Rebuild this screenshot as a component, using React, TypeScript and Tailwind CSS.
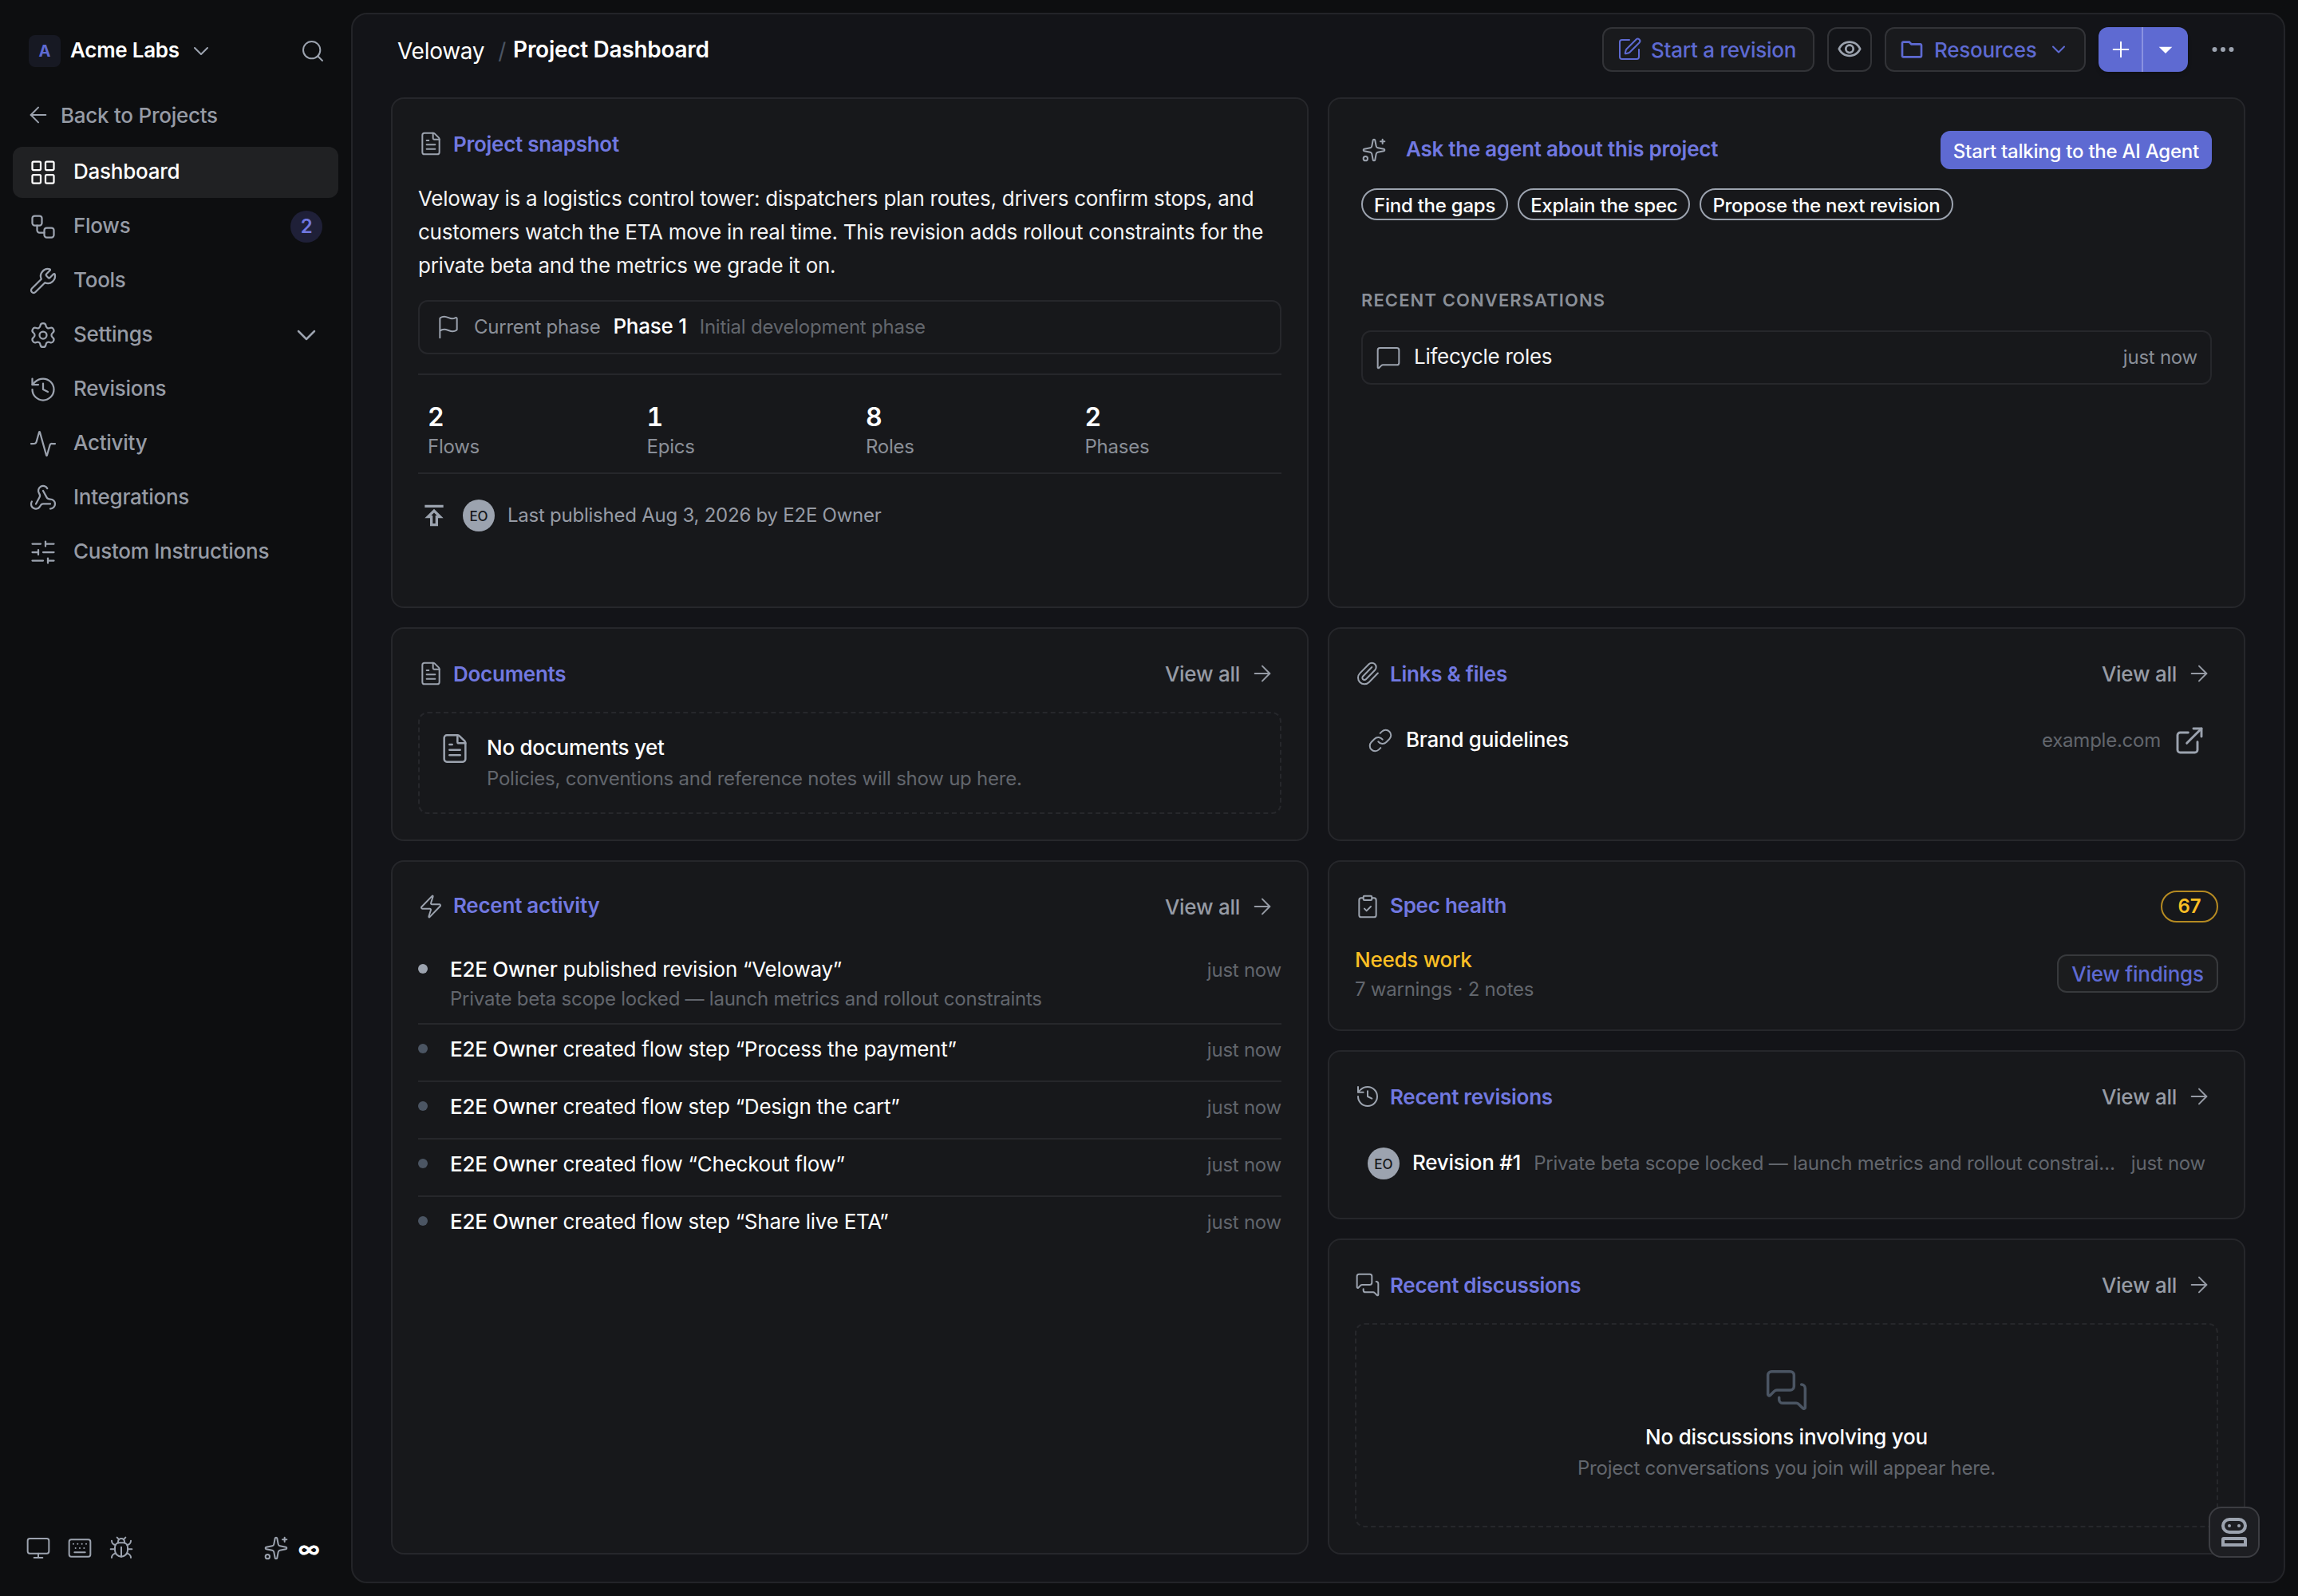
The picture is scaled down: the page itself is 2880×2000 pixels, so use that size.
import type { ReactNode } from "react";
import {
  Activity,
  ArrowLeft,
  ArrowRight,
  Bug,
  ChevronDown,
  ClipboardCheck,
  Ellipsis,
  ExternalLink,
  FileText,
  Flag,
  History,
  Keyboard,
  LayoutGrid,
  Link as LinkIcon,
  MessageSquare,
  MessagesSquare,
  Monitor,
  Paperclip,
  Plus,
  Search,
  Settings,
  SlidersHorizontal,
  Sparkles,
  SquarePen,
  Webhook,
  Workflow,
  Wrench,
  Zap,
} from "lucide-react";
import type { LucideIcon } from "lucide-react";
import { MdArrowDropDown, MdOutlinePublish, MdOutlineVisibility } from "react-icons/md";

const base = "text-[26px] tracking-[-0.01em]";
const small = "text-[24px] tracking-[-0.01em]";

const navItems = [
  { label: "Dashboard", icon: LayoutGrid, active: true },
  { label: "Flows", icon: Workflow, badge: 2 },
  { label: "Tools", icon: Wrench },
  { label: "Settings", icon: Settings, expandable: true },
  { label: "Revisions", icon: History },
  { label: "Activity", icon: Activity },
  { label: "Integrations", icon: Webhook },
  { label: "Custom Instructions", icon: SlidersHorizontal },
];

const stats = [
  { value: 2, label: "Flows" },
  { value: 1, label: "Epics" },
  { value: 8, label: "Roles" },
  { value: 2, label: "Phases" },
];

const activity = [
  {
    text: "published revision “Veloway”",
    note: "Private beta scope locked — launch metrics and rollout constraints",
  },
  { text: "created flow step “Process the payment”" },
  { text: "created flow step “Design the cart”" },
  { text: "created flow “Checkout flow”" },
  { text: "created flow step “Share live ETA”" },
];

const prompts = ["Find the gaps", "Explain the spec", "Propose the next revision"];

function FolderIcon() {
  return (
    <svg viewBox="0 0 24 24" className="size-8 shrink-0" fill="currentColor">
      <path d="M9.17 6l2 2H20v10H4V6h5.17M10 4H4c-1.1 0-1.99.9-1.99 2L2 18c0 1.1.9 2 2 2h16c1.1 0 2-.9 2-2V8c0-1.1-.9-2-2-2h-8l-2-2z" />
    </svg>
  );
}

function RobotIcon() {
  return (
    <svg viewBox="0 0 32 36" className="h-9 w-8" fill="none" stroke="currentColor" strokeWidth={4}>
      <rect x="2" y="2" width="28" height="16" rx="8" />
      <path d="M2 34V27a1 1 0 0 1 1-1h26a1 1 0 0 1 1 1v7z" />
      <circle cx="10" cy="10" r="2" fill="currentColor" stroke="none" />
      <circle cx="22" cy="10" r="2" fill="currentColor" stroke="none" />
    </svg>
  );
}

function Avatar() {
  return (
    <span className="flex size-10 shrink-0 items-center justify-center rounded-full bg-[#9ca3af] pt-[3px] text-[17px] font-medium text-[#17181b]">
      EO
    </span>
  );
}

function Card({ className = "", children }: { className?: string; children: ReactNode }) {
  return (
    <section className={`flex flex-col rounded-2xl border-2 border-[#26272b] bg-[#17181b] ${className}`}>
      {children}
    </section>
  );
}

function CardHeader({
  icon: Icon,
  title,
  raised,
  children,
}: {
  icon: LucideIcon;
  title: string;
  raised?: boolean;
  children?: ReactNode;
}) {
  return (
    <div className="mb-6 flex h-12 shrink-0 items-center">
      <Icon size={32} strokeWidth={1.5} className="shrink-0 text-[#9ca3af]" />
      <h2 className={`ml-3 font-semibold text-[#7178e0] ${base} ${raised ? "pb-[3px]" : ""}`}>{title}</h2>
      <div className="ml-auto">{children}</div>
    </div>
  );
}

function ViewAll() {
  return (
    <a href="#" className={`flex items-center gap-3 pr-2 font-medium text-[#969ba5] ${base}`}>
      View all
      <ArrowRight size={32} strokeWidth={1.5} />
    </a>
  );
}

function Sidebar() {
  return (
    <aside className="flex w-[440px] shrink-0 flex-col px-4 pt-8 pb-11 text-[#969ba5]">
      <div className="flex h-16 items-center pr-4 pl-5">
        <span className="flex size-10 items-center justify-center rounded-lg bg-[#171923] text-[20px] font-bold text-[#5e6ad2]">
          A
        </span>
        <span className={`ml-3 pb-1 font-semibold text-white ${base}`}>Acme Labs</span>
        <ChevronDown size={32} strokeWidth={1.5} className="ml-[11px] text-[#9ca3af]" />
        <Search size={32} strokeWidth={1.5} className="ml-auto text-[#9ca3af]" />
      </div>

      <a href="#" className={`mt-4 flex h-16 items-center gap-3 px-4 font-medium ${base}`}>
        <ArrowLeft size={32} strokeWidth={1.5} className="text-[#9ca3af]" />
        Back to Projects
      </a>

      <nav className="mt-2 flex flex-col gap-1">
        {navItems.map((item) => (
          <a
            key={item.label}
            href="#"
            className={`flex h-16 items-center rounded-xl px-5 font-medium ${base} ${
              item.active ? "bg-[#202123] text-white" : ""
            }`}
          >
            <item.icon size={36} strokeWidth={1.5} className={item.active ? "text-white" : "text-[#9ca3af]"} />
            <span className="ml-5 pb-[3px]">{item.label}</span>
            {item.badge && (
              <span className="ml-auto flex size-10 items-center justify-center rounded-full bg-[#1f2038] text-[24px] font-semibold text-[#7178e0]">
                {item.badge}
              </span>
            )}
            {item.expandable && <ChevronDown size={40} strokeWidth={1.5} className="ml-auto text-[#9ca3af]" />}
          </a>
        ))}
      </nav>

      <div className="mt-auto flex h-8 items-center gap-5 px-4 text-[#9ca3af]">
        <Monitor size={32} strokeWidth={1.5} />
        <Keyboard size={32} strokeWidth={1.5} />
        <Bug size={32} strokeWidth={1.5} />
        <div className="ml-auto flex items-center gap-3 pr-[7px]">
          <Sparkles size={32} strokeWidth={1.5} />
          <span className="pt-0.5 text-[28px] leading-8 font-bold text-white">∞</span>
        </div>
      </div>
    </aside>
  );
}

function TopBar() {
  return (
    <header className="flex h-[88px] items-center pr-12 pl-14">
      <div className="flex items-center text-[28px] tracking-[-0.01em] text-white">
        <span className="pt-1">Veloway</span>
        <span className="ml-[17px] pt-1 text-[#4b5563]">/</span>
        <h1 className="ml-[9px] font-semibold">Project Dashboard</h1>
      </div>

      <div className="ml-auto flex items-center gap-4">
        <button
          className={`flex h-14 w-[266px] items-center gap-[11px] rounded-xl border-2 border-[#323337] bg-[#191a1d] pl-4 font-medium whitespace-nowrap text-[#5e6ad2] ${base}`}
        >
          <SquarePen size={32} strokeWidth={1.5} className="shrink-0" />
          Start a revision
        </button>
        <button className="flex size-14 items-center justify-center rounded-xl border-2 border-[#323337] text-[#9ca3af]">
          <MdOutlineVisibility size={32} />
        </button>
        <button
          className={`flex h-14 w-[252px] items-center rounded-xl border-2 border-[#323337] bg-[#191a1d] px-4 font-medium text-[#5e6ad2] ${base}`}
        >
          <FolderIcon />
          <span className="ml-3">Resources</span>
          <ChevronDown size={28} strokeWidth={1.75} className="ml-[13px] shrink-0" />
        </button>
        <div className="flex h-14 w-28 overflow-hidden rounded-xl bg-[#5e6ad2] text-white shadow-md">
          <button className="flex w-14 items-center justify-center border-r-2 border-[#8a92e0] pl-0.5">
            <Plus size={32} strokeWidth={1.5} />
          </button>
          <button className="flex w-14 items-center justify-center">
            <MdArrowDropDown size={40} />
          </button>
        </div>
        <button className="flex size-14 items-center justify-center text-[#9ca3af]">
          <Ellipsis size={36} />
        </button>
      </div>
    </header>
  );
}

function SnapshotCard() {
  return (
    <Card className="h-[640px] p-8">
      <CardHeader icon={FileText} title="Project snapshot" />
      <p className={`leading-[42px] text-[#f4f4f5] ${base}`}>
        Veloway is a logistics control tower: dispatchers plan routes, drivers confirm stops, and customers watch the
        ETA move in real time. This revision adds rollout constraints for the private beta and the metrics we grade it
        on.
      </p>

      <div className="mt-[22px] flex h-[68px] shrink-0 items-center gap-4 rounded-xl border-2 border-[#26272b] px-5">
        <Flag size={32} strokeWidth={1.5} className="text-[#9ca3af]" />
        <span className={`text-[#8a8f98] ${small}`}>Current phase</span>
        <span className={`pb-[3px] font-medium text-white ${base}`}>Phase 1</span>
        <span className={`text-[#62666d] ${small}`}>Initial development phase</span>
      </div>

      <div className="mt-6 grid grid-cols-4 gap-4 border-y-2 border-[#26272b] pt-[33px] pb-[15px]">
        {stats.map((s) => (
          <div key={s.label} className="px-3">
            <p className="text-[32px] leading-[40px] font-semibold text-white tabular-nums">{s.value}</p>
            <p className={`leading-[34px] text-[#8a8f98] ${small}`}>{s.label}</p>
          </div>
        ))}
      </div>

      <div className={`mt-8 flex items-center gap-4 text-[#969ba5] ${small}`}>
        <MdOutlinePublish size={40} className="text-[#9ca3af]" />
        <Avatar />
        <span>Last published Aug 3, 2026 by E2E Owner</span>
      </div>
    </Card>
  );
}

function AgentCard() {
  return (
    <Card className="h-[640px] p-10">
      <div className="flex h-12 items-center">
        <Sparkles size={32} strokeWidth={1.5} className="text-[#9ca3af]" />
        <h2 className={`ml-6 pb-[3px] font-semibold text-[#7178e0] ${base}`}>Ask the agent about this project</h2>
        <button className={`ml-auto h-12 rounded-xl bg-[#5e6ad2] px-4 pt-1 font-medium text-white ${small}`}>
          Start talking to the AI Agent
        </button>
      </div>

      <div className="mt-6 flex gap-3">
        {prompts.map((p) => (
          <button
            key={p}
            className={`flex h-10 items-center rounded-full border-2 border-[#9ca3af] px-[14px] pt-1 font-medium text-white ${small}`}
          >
            {p}
          </button>
        ))}
      </div>

      <h3 className="mt-[84px] text-[22px] leading-[33px] font-semibold tracking-[0.05em] text-[#8a8f98]">
        RECENT CONVERSATIONS
      </h3>
      <a href="#" className="mt-[21px] flex h-[68px] items-center rounded-xl border-2 border-[#26272b] px-4">
        <MessageSquare size={32} strokeWidth={1.5} className="text-[#9ca3af]" />
        <span className={`ml-4 pb-[3px] text-[#f4f4f5] ${base}`}>Lifecycle roles</span>
        <span className={`ml-auto text-[#8a8f98] ${small}`}>just now</span>
      </a>
    </Card>
  );
}

function DocumentsCard() {
  return (
    <Card className="h-[268px] p-8">
      <CardHeader icon={FileText} title="Documents">
        <ViewAll />
      </CardHeader>
      <div className="flex h-32 gap-5 rounded-xl border-2 border-dashed border-[#26272b] p-6">
        <FileText size={40} strokeWidth={1.5} className="text-[#9ca3af]" />
        <div>
          <p className={`leading-[38px] font-medium text-white ${base}`}>No documents yet</p>
          <p className={`leading-[40px] text-[#62666d] ${small}`}>
            Policies, conventions and reference notes will show up here.
          </p>
        </div>
      </div>
    </Card>
  );
}

function ActivityCard() {
  return (
    <Card className="h-[870px] p-8">
      <CardHeader icon={Zap} title="Recent activity" raised>
        <ViewAll />
      </CardHeader>
      <ul className="flex flex-col">
        {activity.map((a, i) => (
          <li key={a.text} className={`flex gap-7 py-3 ${i > 0 ? "border-t-2 border-[#26272b]" : ""}`}>
            <span className={`mt-3 size-3 shrink-0 rounded-full ${i === 0 ? "bg-[#9ca3af]" : "bg-[#4b5563]"}`} />
            <div className="min-h-[46px] grow">
              <p className={`leading-[38px] text-white ${base}`}>
                <span className="font-medium">E2E Owner</span> {a.text}
              </p>
              {a.note && <p className={`leading-[36px] text-[#62666d] ${small}`}>{a.note}</p>}
            </div>
            <span className={`leading-[40px] text-[#62666d] ${small}`}>just now</span>
          </li>
        ))}
      </ul>
    </Card>
  );
}

function LinksCard() {
  return (
    <Card className="h-[268px] p-8">
      <CardHeader icon={Paperclip} title="Links & files">
        <ViewAll />
      </CardHeader>
      <a href="#" className="flex h-[72px] items-center gap-4 px-4">
        <LinkIcon size={32} strokeWidth={1.5} className="text-[#9ca3af]" />
        <span className={`pb-[3px] font-medium text-white ${base}`}>Brand guidelines</span>
        <span className={`ml-auto text-[#62666d] ${small}`}>example.com</span>
        <ExternalLink size={40} strokeWidth={1.75} className="text-[#9ca3af]" />
      </a>
    </Card>
  );
}

function HealthCard() {
  return (
    <Card className="h-[214px] p-8">
      <CardHeader icon={ClipboardCheck} title="Spec health" raised>
        <span className="flex h-10 w-[72px] items-center justify-center rounded-full border-2 border-[#b58a22] text-[24px] font-semibold text-[#fbbf24]">
          67
        </span>
      </CardHeader>
      <div className="flex items-center justify-between">
        <div>
          <p className={`leading-[38px] font-medium text-[#fbbf24] ${base}`}>Needs work</p>
          <p className={`leading-[36px] text-[#62666d] ${small}`}>7 warnings · 2 notes</p>
        </div>
        <button
          className={`mb-0.5 h-12 w-[202px] rounded-xl border-2 border-[#37393c] bg-[#1b1c1e] font-medium text-[#5e6ad2] ${base}`}
        >
          View findings
        </button>
      </div>
    </Card>
  );
}

function RevisionsCard() {
  return (
    <Card className="h-[212px] p-8">
      <CardHeader icon={History} title="Recent revisions">
        <ViewAll />
      </CardHeader>
      <a href="#" className="flex h-[72px] shrink-0 items-center gap-4 px-4">
        <Avatar />
        <span className={`shrink-0 pb-[3px] font-medium text-white ${base}`}>Revision #1</span>
        <span className={`min-w-0 grow truncate text-[#62666d] ${small}`}>
          Private beta scope locked — launch metrics and rollout constraints
        </span>
        <span className={`shrink-0 text-[#62666d] ${small}`}>just now</span>
      </a>
    </Card>
  );
}

function DiscussionsCard() {
  return (
    <Card className="h-[396px] p-8">
      <CardHeader icon={MessagesSquare} title="Recent discussions">
        <ViewAll />
      </CardHeader>
      <div className="flex grow flex-col items-center justify-center rounded-xl border-2 border-dashed border-[#26272b]">
        <MessagesSquare size={56} strokeWidth={1.5} className="mb-3 text-[#4b5563]" />
        <p className={`leading-[38px] font-medium text-white ${base}`}>No discussions involving you</p>
        <p className={`leading-[39px] text-[#62666d] ${small}`}>Project conversations you join will appear here.</p>
      </div>
    </Card>
  );
}

export default function App() {
  return (
    <div className="relative flex h-[2000px] w-[2880px] overflow-hidden bg-[#0d0e10] font-['Inter',sans-serif]">
      <Sidebar />

      <main className="mt-4 mr-4 mb-4 flex grow flex-col rounded-[20px] border-2 border-[#232428] bg-[#131418]">
        <TopBar />
        <div className="mt-4 grid grid-cols-2 gap-6 px-12">
          <div className="flex flex-col gap-6">
            <SnapshotCard />
            <DocumentsCard />
            <ActivityCard />
          </div>
          <div className="flex flex-col gap-6">
            <AgentCard />
            <LinksCard />
            <HealthCard />
            <RevisionsCard />
            <DiscussionsCard />
          </div>
        </div>
      </main>

      {/* Floating assistant launcher */}
      <button className="absolute right-12 bottom-12 flex size-16 items-center justify-center rounded-2xl border-2 border-[#3c3d42] bg-[#1d1e22] text-[#9ca3af]">
        <RobotIcon />
      </button>
    </div>
  );
}
